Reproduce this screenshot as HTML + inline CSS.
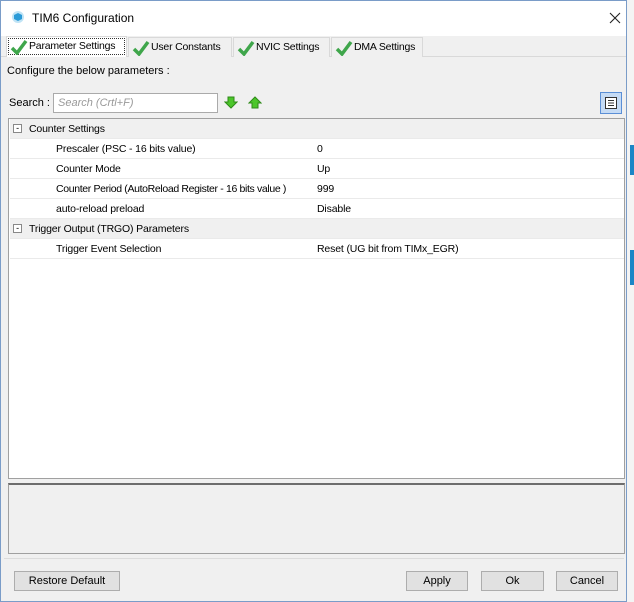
<!DOCTYPE html>
<html><head><style>
*{box-sizing:border-box;margin:0;padding:0}
body{width:634px;height:602px;background:#f0f0f0;font-family:"Liberation Sans",sans-serif;font-size:11px;color:#000;position:relative;overflow:hidden}
.abs{position:absolute;white-space:nowrap}
.win{left:0;top:0;width:627px;height:602px;border:1px solid #7a9cc8;background:#f0f0f0}
.title{left:1px;top:1px;width:625px;height:35px;background:#fff}
.tab{top:37px;height:20px;border:1px solid #d9d9d9;border-bottom:none;background:#f0f0f0;font-size:10.5px;line-height:19px;padding-left:22px;letter-spacing:-0.2px}
.chk{position:absolute;left:3px;top:2px}
.row{position:absolute;left:1px;width:614px;height:20px;line-height:20px;border-bottom:1px solid #eaeaea;background:#fff;font-size:10.5px;letter-spacing:-0.15px}
.row span{white-space:nowrap}
.hdr{background:#f0f0f0}
.btn{top:571px;height:20px;border:1px solid #adadad;background:#e1e1e1;text-align:center;line-height:18px;font-size:11px}
</style></head><body>
<div class="abs" style="left:627px;top:0;width:7px;height:602px;background:#f4f4f4"></div>
<div class="abs" style="left:630px;top:145px;width:4px;height:30px;background:#1b86c6"></div>
<div class="abs" style="left:630px;top:250px;width:4px;height:35px;background:#1b86c6"></div>
<div class="abs win"></div>
<div class="abs title"></div>
<svg class="abs" style="left:11px;top:10px" width="14" height="14"><circle cx="7" cy="7" r="6" fill="#bfe3f5"/><polygon points="7,3 11,5 11,9 7,11 3,9 3,5" fill="#2b9bd8"/></svg>
<div class="abs" style="left:32px;top:11px;font-size:12px">TIM6 Configuration</div>
<svg class="abs" style="left:609px;top:12px" width="12" height="12"><path d="M1 1L11 11M11 1L1 11" stroke="#222" stroke-width="1.1"/></svg>
<div class="abs" style="left:1px;top:56px;width:625px;height:1px;background:#d9d9d9"></div>
<div class="abs tab" style="left:6px;width:121px;background:#fff;outline:1px dotted #333;outline-offset:-3px;top:36px;height:21px">Parameter Settings<svg class="chk" width="18" height="16"><path d="M2 9 L7 14 L16 2" stroke="#3fa64b" stroke-width="3.5" fill="none"/></svg></div>
<div class="abs tab" style="left:128px;width:104px">User Constants<svg class="chk" width="18" height="16"><path d="M2 9 L7 14 L16 2" stroke="#3fa64b" stroke-width="3.5" fill="none"/></svg></div>
<div class="abs tab" style="left:233px;width:97px">NVIC Settings<svg class="chk" width="18" height="16"><path d="M2 9 L7 14 L16 2" stroke="#3fa64b" stroke-width="3.5" fill="none"/></svg></div>
<div class="abs tab" style="left:331px;width:92px">DMA Settings<svg class="chk" width="18" height="16"><path d="M2 9 L7 14 L16 2" stroke="#3fa64b" stroke-width="3.5" fill="none"/></svg></div>
<div class="abs" style="left:7px;top:65px">Configure the below parameters :</div>
<div class="abs" style="left:9px;top:97px">Search :</div>
<div class="abs" style="left:53px;top:93px;width:165px;height:20px;background:#fff;border:1px solid #aaa;color:#999;font-style:italic;padding:3px 4px">Search (Crtl+F)</div>
<svg class="abs" style="left:224px;top:96px" width="14" height="13"><path d="M4 1h6v5h3L7 12 1 6h3z" fill="#4cc62a" stroke="#2e8a18"/></svg>
<svg class="abs" style="left:248px;top:96px" width="14" height="13"><path d="M4 12h6V7h3L7 1 1 7h3z" fill="#4cc62a" stroke="#2e8a18"/></svg>
<div class="abs" style="left:600px;top:92px;width:22px;height:22px;background:#c5dbf5;border:1px solid #5b8fd6"></div>
<svg class="abs" style="left:604px;top:96px" width="14" height="14"><rect x="1.5" y="1.5" width="11" height="11" fill="#fff" stroke="#333"/><path d="M4 4.5h6M4 7h6M4 9.5h6" stroke="#333"/></svg>
<div class="abs" style="left:8px;top:118px;width:617px;height:361px;background:#fff;border:1px solid #a0a0a0">
<div class="row hdr" style="top:0"><span class="abs" style="left:3px;top:5px;width:9px;height:9px;border:1px solid #888;line-height:6px;font-size:9px;text-align:center;background:#fff">-</span><span style="position:absolute;left:19px">Counter Settings</span></div>
<div class="row" style="top:20px"><span style="position:absolute;left:46px">Prescaler (PSC - 16 bits value)</span><span style="position:absolute;left:307px">0</span></div>
<div class="row" style="top:40px"><span style="position:absolute;left:46px">Counter Mode</span><span style="position:absolute;left:307px">Up</span></div>
<div class="row" style="top:60px"><span style="position:absolute;left:46px;letter-spacing:-0.35px">Counter Period (AutoReload Register - 16 bits value )</span><span style="position:absolute;left:307px">999</span></div>
<div class="row" style="top:80px"><span style="position:absolute;left:46px">auto-reload preload</span><span style="position:absolute;left:307px">Disable</span></div>
<div class="row hdr" style="top:100px"><span class="abs" style="left:3px;top:5px;width:9px;height:9px;border:1px solid #888;line-height:6px;font-size:9px;text-align:center;background:#fff">-</span><span style="position:absolute;left:19px">Trigger Output (TRGO) Parameters</span></div>
<div class="row" style="top:120px"><span style="position:absolute;left:46px">Trigger Event Selection</span><span style="position:absolute;left:307px">Reset (UG bit from TIMx_EGR)</span></div>
</div>
<div class="abs" style="left:8px;top:483px;width:617px;height:71px;background:#f0f0f0;border:1px solid #a0a0a0;border-top:2px solid #6d6d6d"></div>
<div class="abs" style="left:4px;top:558px;width:620px;height:1px;background:#dcdcdc"></div>
<div class="abs btn" style="left:14px;width:106px">Restore Default</div>
<div class="abs btn" style="left:406px;width:62px">Apply</div>
<div class="abs btn" style="left:481px;width:63px">Ok</div>
<div class="abs btn" style="left:556px;width:62px">Cancel</div>
</body></html>
